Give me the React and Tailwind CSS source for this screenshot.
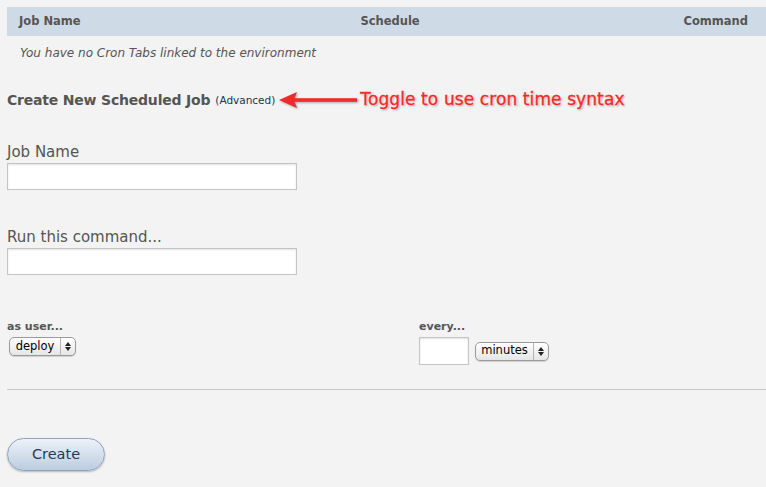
import React from "react";

const font = { fontFamily: '"DejaVu Sans", Verdana, sans-serif' };

const Stepper = () => (
  <span className="flex flex-col items-center justify-center border-l border-[#b5b5b5] h-full px-[4px] gap-[1px]">
    <svg width="6" height="4" viewBox="0 0 6 4"><path d="M0 4 L3 0 L6 4 Z" fill="#222" /></svg>
    <svg width="6" height="4" viewBox="0 0 6 4"><path d="M0 0 L3 4 L6 0 Z" fill="#222" /></svg>
  </span>
);

const MacSelect = ({ label, width }) => (
  <div
    className={`flex items-center h-[19px] rounded-[5px] border border-[#9a9a9a] bg-gradient-to-b from-white to-[#e6e6e6] shadow-[0_1px_1px_rgba(0,0,0,0.15)] ${width}`}
  >
    <span className="flex-1 text-center text-[11.5px] text-black leading-none">{label}</span>
    <Stepper />
  </div>
);

export default function App() {
  return (
    <div className="min-h-[487px] w-[766px] bg-[#f3f3f3] text-[#555] overflow-hidden" style={font}>
      <div className="pt-[7px] pl-[7px]">
        {/* table header */}
        <div className="flex items-center justify-between h-[29px] pt-[1px] bg-[#cfdae7] px-[12px] text-[11.5px] font-bold text-[#555]">
          <span>Job Name</span>
          <span className="pl-[16px]">Schedule</span>
          <span className="pr-[6px]">Command</span>
        </div>
        <div className="h-[34px] flex items-center pl-[13px] text-[12px] italic text-[#555]">
          You have no Cron Tabs linked to the environment
        </div>
      </div>

      <div className="px-[7px]">
        {/* heading + annotation */}
        <div className="flex items-center mt-[20px] h-[20px]">
          <span className="text-[14px] font-bold text-[#555] tracking-[-0.2px]">Create New Scheduled Job</span>
          <span className="ml-[5px] text-[10.5px] text-[#1a3352] mt-[2px]">(Advanced)</span>
          <svg width="80" height="20" viewBox="0 0 80 20" className="ml-[3px]" style={{ filter: "drop-shadow(1px 1px 1px rgba(0,0,0,0.35))" }}>
            <path d="M1 10 L19 2 L16.5 8.3 L79 8.3 L79 11.7 L16.5 11.7 L19 18 Z" fill="#f0292a" />
          </svg>
          <span
            className="ml-[2px] text-[17px] text-[#f12a2a] tracking-[0.1px]"
            style={{ WebkitTextStroke: "0.4px #f12a2a", textShadow: "0 0 2px #fff, 0 0 2px #fff, 0 0 1px #fff, 1px 1px 2px rgba(0,0,0,0.45)" }}
          >
            Toggle to use cron time syntax
          </span>
        </div>

        {/* Job name */}
        <div className="mt-[31px] text-[15px] leading-[22px] text-[#555]">Job Name</div>
        <div className="mt-[0px] w-[290px] h-[27px] bg-white border border-[#c4c4c4] shadow-[inset_0_1px_2px_rgba(0,0,0,0.12)]" />

        {/* command */}
        <div className="mt-[36px] text-[15px] leading-[22px] text-[#555]">Run this command...</div>
        <div className="mt-[0px] w-[290px] h-[27px] bg-white border border-[#c4c4c4] shadow-[inset_0_1px_2px_rgba(0,0,0,0.12)]" />

        {/* user / every */}
        <div className="mt-[45px] flex">
          <div className="w-[412px]">
            <div className="text-[11px] leading-[14px] font-bold text-[#555]">as user...</div>
            <div className="mt-[3px] ml-[2px]">
              <MacSelect label="deploy" width="w-[67px]" />
            </div>
          </div>
          <div>
            <div className="text-[11px] leading-[14px] font-bold text-[#555]">every...</div>
            <div className="mt-[3px] flex items-center gap-[6px]">
              <div className="w-[50px] h-[28px] bg-white border border-[#c4c4c4] shadow-[inset_0_1px_2px_rgba(0,0,0,0.12)]" />
              <MacSelect label="minutes" width="w-[74px]" />
            </div>
          </div>
        </div>
      </div>

      <div className="ml-[7px] mt-[24px] border-t border-[#c9c9c9]" />

      <div className="px-[7px] mt-[48px]">
        <button className="w-[98px] h-[33px] rounded-full border border-[#8fa3bb] bg-gradient-to-b from-[#edf2f8] to-[#bccde0] shadow-[0_1px_2px_rgba(0,0,0,0.25)] text-[14.5px] text-[#233a56]" style={font}>
          Create
        </button>
      </div>
    </div>
  );
}
